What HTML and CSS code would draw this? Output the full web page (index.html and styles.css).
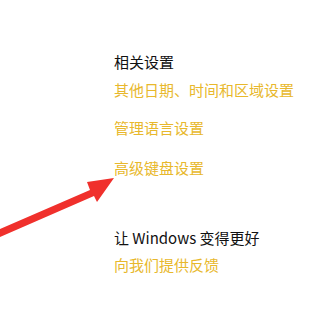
FILE: index.html
```html
<!DOCTYPE html>
<html lang="zh-CN">
<head>
<meta charset="utf-8">
<link rel="stylesheet" href="styles.css">
</head>
<body>
<div class="page">
  <section class="group">
    <h2 class="heading">相关设置</h2>
    <a class="link first">其他日期、时间和区域设置</a>
    <a class="link">管理语言设置</a>
    <a class="link">高级键盘设置</a>
  </section>
  <section class="group second">
    <h2 class="heading">让 Windows 变得更好</h2>
    <a class="link first">向我们提供反馈</a>
  </section>
  <svg class="arrow" width="333" height="309" viewBox="0 0 333 309">
    <polygon points="0,229 90,190 87,182 114,178 97,202 94,196 0,237" fill="#f0302c"/>
  </svg>
</div>
</body>
</html>
```

FILE: styles.css
```css
html, body {
  margin: 0;
  padding: 0;
  background: #ffffff;
}
.page {
  position: relative;
  width: 333px;
  height: 309px;
  overflow: hidden;
  padding: 52px 0 0 114px;
  box-sizing: border-box;
  font-family: "Noto Sans CJK SC", "Microsoft YaHei", sans-serif;
  font-size: 15px;
  line-height: 20px;
}
.group {
  display: flex;
  flex-direction: column;
  align-items: flex-start;
}
.second {
  margin-top: 50px;
}
.heading {
  margin: 0;
  font-size: 15px;
  font-weight: normal;
  color: #111111;
  line-height: 20px;
}
.link {
  color: #e8b82c;
  margin-top: 18px;
  text-decoration: none;
}
.link + .link {
  margin-top: 18px;
}
.link.first {
  margin-top: 8px;
}
.link:last-child:not(.first) {
  margin-top: 20px;
}
.second .link.first {
  margin-top: 7px;
}
.arrow {
  position: absolute;
  left: 0;
  top: 0;
  pointer-events: none;
}
```
